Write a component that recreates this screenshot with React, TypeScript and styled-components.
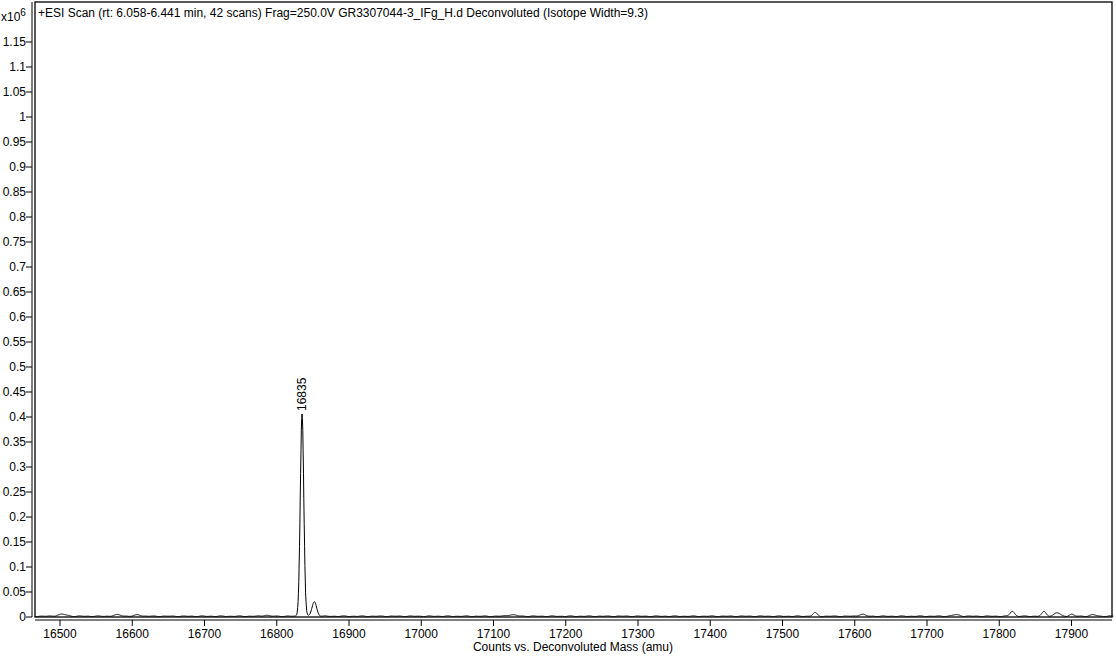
import React from 'react'
import styled, { createGlobalStyle } from 'styled-components'

const Global = createGlobalStyle`
  html, body { margin: 0; padding: 0; background: #fff; }
  body { font-family: Arial, "Liberation Sans", sans-serif; }
`

const Page = styled.div`
  width: 1116px;
  height: 665px;
  display: flex;
  flex-direction: column;
  background: #fff;
  overflow: hidden;
`

const Chart = styled.svg`
  display: block;
  flex: none;
`

const Caption = styled.div`
  flex: 1;
  display: flex;
  justify-content: center;
  padding-left: 30px;
  font-size: 12px;
  color: #000;
  padding-top: 0;
`

const L = 35, R = 1112, T = 2, B = 617
const mx = (m: number) => 60 + (m - 16500) * 0.7225
const iy = (v: number) => B - v * 500

const bumps: [number, number, number][] = [
  [16835, 0.405, 2.4], [16852, 0.029, 3.2], [16503, 0.004, 6], [16580, 0.003, 5],
  [16608, 0.003, 4], [16785, 0.002, 4], [17125, 0.003, 6], [17545, 0.007, 3],
  [17610, 0.004, 4], [17740, 0.003, 5], [17818, 0.01, 3], [17862, 0.009, 3],
  [17880, 0.007, 4], [17900, 0.004, 3], [17930, 0.003, 4],
]

function spectrum() {
  const pts: string[] = []
  for (let m = 16466; m <= 17958; m += 0.5) {
    let v = 0.0015 + 0.0008 * Math.sin(m * 0.37) * Math.sin(m * 0.11)
    for (const [c, h, w] of bumps) v += h * Math.exp(-((m - c) ** 2) / (2 * w * w))
    pts.push(`${mx(m).toFixed(1)},${iy(v).toFixed(1)}`)
  }
  return 'M' + pts.join('L')
}

const yTicks = Array.from({ length: 24 }, (_, i) => i * 0.05)
const xTicks = Array.from({ length: 15 }, (_, i) => 16500 + i * 100)
const fmt = (v: number) => (Math.round(v * 100) / 100).toString()

export default function App() {
  return (
    <Page>
      <Global />
      <Chart width={1116} height={640} fontFamily="Arial, 'Liberation Sans', sans-serif" fontSize={12}>
        <rect x={L} y={T} width={R - L} height={B - T} fill="none" stroke="#000" strokeWidth={1.3} />
        <line x1={L - 3} y1={T} x2={L - 3} y2={B} stroke="#000" strokeWidth={1} />
        <line x1={L} y1={B + 3} x2={R} y2={B + 3} stroke="#000" strokeWidth={1} />
        {yTicks.map(v => (
          <g key={v}>
            <line x1={L - 9} x2={L - 3} y1={iy(v)} y2={iy(v)} stroke="#000" />
            <text x={L - 9} y={iy(v) + 4} textAnchor="end">{fmt(v)}</text>
          </g>
        ))}
        <text x={1} y={21}>x10<tspan dy={-5} fontSize={10}>6</tspan></text>
        {xTicks.map(m => (
          <g key={m}>
            <line x1={mx(m)} x2={mx(m)} y1={B + 3} y2={B + 9} stroke="#000" />
            <text x={mx(m)} y={B + 21} textAnchor="middle">{m}</text>
          </g>
        ))}
        <text x={38} y={17}>+ESI Scan (rt: 6.058-6.441 min, 42 scans) Frag=250.0V GR3307044-3_IFg_H.d  Deconvoluted (Isotope Width=9.3)</text>
        <path d={spectrum()} fill="none" stroke="#000" strokeWidth={1} />
        <text transform={`translate(${mx(16835) + 4},${iy(0.412)}) rotate(-90)`}>16835</text>
      </Chart>
      <Caption>Counts vs. Deconvoluted Mass (amu)</Caption>
    </Page>
  )
}
